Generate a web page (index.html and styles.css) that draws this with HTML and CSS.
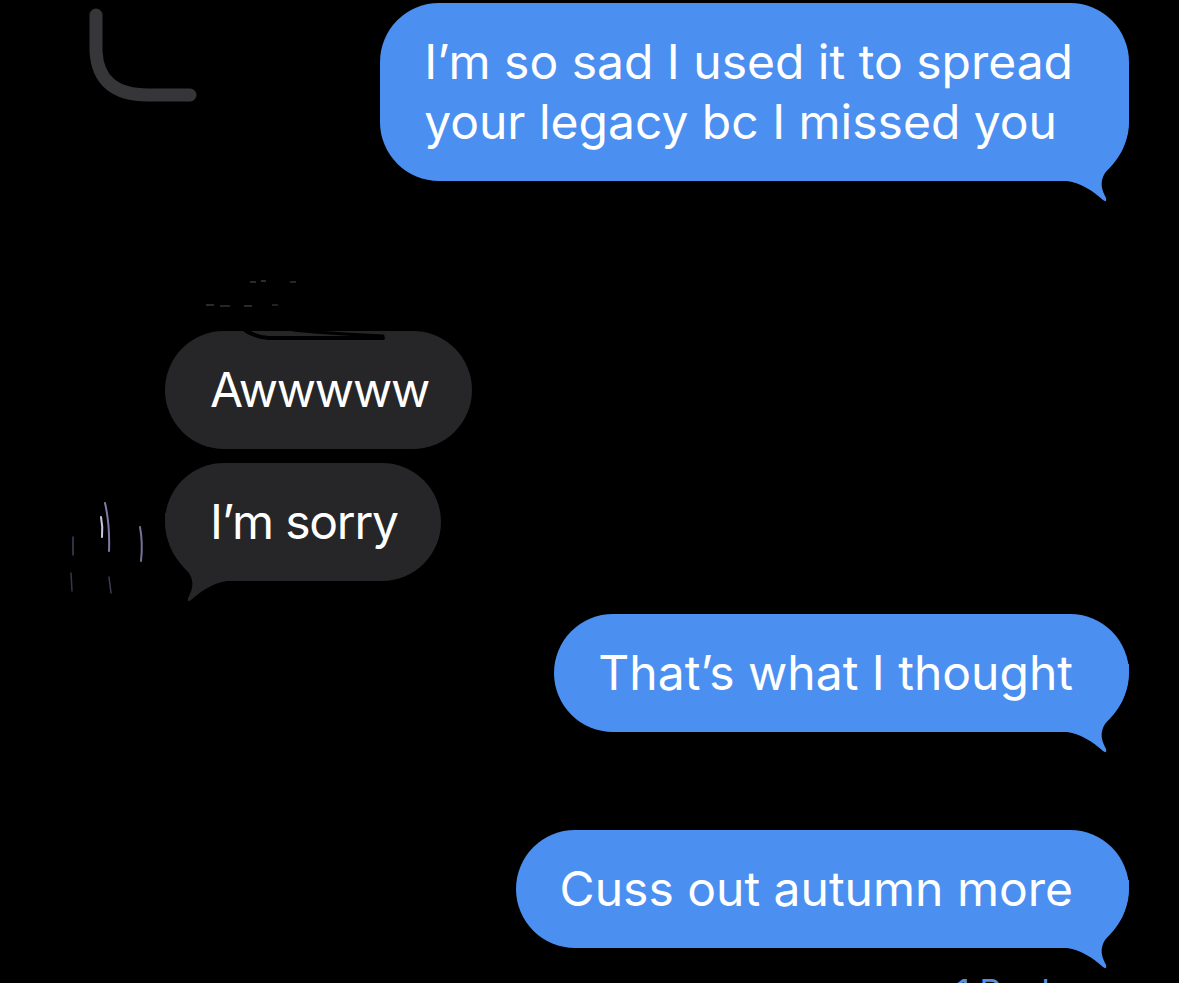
FILE: index.html
```html
<!DOCTYPE html>
<html>
<head>
  <title>Messages</title>
  <meta name="viewport" content="width=device-width, initial-scale=1">
  <link rel="stylesheet" href="styles.css">
</head>
<body>
  <div class="thread">
    <div class="row row-top">
      <svg class="reply-line" width="110" height="100" viewBox="0 0 110 100">
        <path d="M8 12 L8 48 Q10 92 60 92 L102 92" fill="none" stroke="#363638" stroke-width="13" stroke-linecap="round"/>
      </svg>
      <div class="bubble blue">
        <svg class="tail tail-right" width="70" height="90" viewBox="0 0 70 90">
          <path d="M0 68 L8 68 C22 70 34 78 44 87 Q48 90 47 85 C43 77 40 70 46 60 C58 47 70 36 70 0 L0 0 Z" fill="#4b8ff1"/>
        </svg>
        <span class="text">I’m so sad I used it to spread<br>your legacy bc I missed you</span>
      </div>
    </div>

    <div class="sender">
      <svg width="110" height="30" viewBox="0 0 110 30">
        <rect x="44" y="2" width="6" height="2" fill="#2a2a2a"/>
        <rect x="55" y="1" width="5" height="2" fill="#2e2e2e"/>
        <rect x="84" y="2" width="6" height="2" fill="#262626"/>
        <rect x="0" y="25" width="8" height="2" fill="#2a2a2a"/>
        <rect x="14" y="26" width="10" height="2" fill="#262626"/>
        <rect x="38" y="26" width="8" height="2" fill="#2a2a2a"/>
        <rect x="66" y="25" width="6" height="2" fill="#222"/>
      </svg>
    </div>

    <div class="row row-in">
      <div class="bubble gray">
        <span class="text">Awwwww</span>
        <svg class="scribble" width="230" height="14" viewBox="0 0 230 14">
          <path d="M80 0 Q90 7 104 8 L218 8" fill="none" stroke="#000" stroke-width="4" stroke-linecap="round"/>
          <path d="M128 0 Q170 4 218 6" fill="none" stroke="#000" stroke-width="3" stroke-linecap="round"/>
        </svg>
      </div>
    </div>

    <div class="row row-in row-avatar">
      <svg class="avatar" width="100" height="110" viewBox="0 0 100 110">
        <g fill="none" stroke-linecap="round">
          <path d="M40 18 Q45 40 44 66" stroke="#9c98d0" stroke-width="2" opacity="0.8"/>
          <path d="M36 32 Q38 42 37 52" stroke="#e0ddf5" stroke-width="2" opacity="0.9"/>
          <path d="M75 42 Q78 58 76 76" stroke="#a7a3dc" stroke-width="2" opacity="0.7"/>
          <path d="M8 52 L8 70" stroke="#6f6c96" stroke-width="1.5" opacity="0.6"/>
          <path d="M6 88 L7 106" stroke="#6f6c96" stroke-width="1.5" opacity="0.5"/>
          <path d="M44 92 L46 108" stroke="#7a77a6" stroke-width="1.5" opacity="0.5"/>
        </g>
      </svg>
      <div class="bubble gray">
        <svg class="tail tail-left" width="70" height="90" viewBox="0 0 70 90">
          <path d="M0 68 L8 68 C22 70 34 78 44 87 Q48 90 47 85 C43 77 40 70 46 60 C58 47 70 36 70 0 L0 0 Z" fill="#262628"/>
        </svg>
        <span class="text">I’m sorry</span>
      </div>
    </div>

    <div class="row row-out row-thought">
      <div class="bubble blue">
        <svg class="tail tail-right" width="70" height="90" viewBox="0 0 70 90">
          <path d="M0 68 L8 68 C22 70 34 78 44 87 Q48 90 47 85 C43 77 40 70 46 60 C58 47 70 36 70 0 L0 0 Z" fill="#4b8ff1"/>
        </svg>
        <span class="text">That’s what I thought</span>
      </div>
    </div>

    <div class="row row-out row-cuss">
      <div class="bubble blue">
        <svg class="tail tail-right" width="70" height="90" viewBox="0 0 70 90">
          <path d="M0 68 L8 68 C22 70 34 78 44 87 Q48 90 47 85 C43 77 40 70 46 60 C58 47 70 36 70 0 L0 0 Z" fill="#4b8ff1"/>
        </svg>
        <span class="text">Cuss out autumn more</span>
      </div>
    </div>

    <div class="row row-out reply-count">1 Reply</div>
  </div>
</body>
</html>
```

FILE: styles.css
```css
html, body {
  margin: 0;
  background-color: #000;
}
body {
  height: 983px;
  overflow: hidden;
  font-family: Inter, "Open Sans", Arial, sans-serif;
  color: #fff;
}
.thread {
  display: flex;
  flex-direction: column;
  padding: 3px 50px 0 0;
}
.row {
  display: flex;
}
.row-top {
  justify-content: space-between;
  align-items: flex-start;
}
.reply-line {
  margin-left: 88px;
}
.row-out {
  justify-content: flex-end;
}
.row-in {
  padding-left: 165px;
  margin-top: 14px;
}
.row-avatar {
  padding-left: 65px;
  align-items: flex-start;
}
.avatar {
  margin-top: 22px;
  margin-bottom: -14px;
}
.sender {
  height: 150px;
  display: flex;
  align-items: flex-end;
  padding-left: 206px;
  box-sizing: border-box;
  padding-bottom: 22px;
  margin-bottom: -14px;
}
.bubble {
  position: relative;
  font-size: 48px;
  line-height: 60px;
  padding: 29px 56px 29px 44px;
  border-radius: 59px;
  white-space: nowrap;
}
.bubble .text {
  position: relative;
}
.bubble.blue {
  background-color: #4b8ff1;
}
.bubble.gray {
  background-color: #262628;
  padding: 29px 43px 29px 45px;
  letter-spacing: -1.2px;
}
.tail {
  position: absolute;
  bottom: -22px;
}
.tail-right {
  right: 0;
}
.tail-left {
  left: 0;
  transform: scaleX(-1);
}
.scribble {
  position: absolute;
  top: -1px;
  left: 0;
}
.row-thought {
  margin-top: 33px;
}
.row-cuss {
  margin-top: 98px;
}
.reply-count {
  margin-top: 24px;
  padding-right: 60px;
  font-size: 34px;
  line-height: 40px;
  color: #5a8fe0;
}
```
